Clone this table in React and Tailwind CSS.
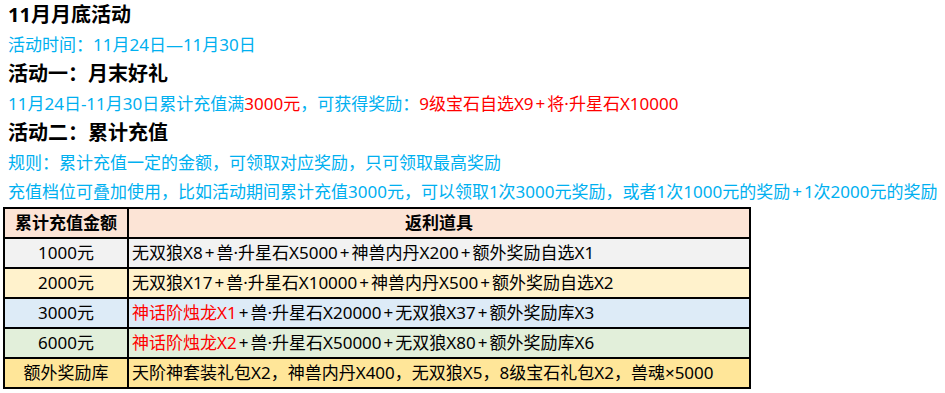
function T({ text }) {
  const parts = text.split("+");
  return (
    <>
      {parts.map((p, i) => (
        <span key={i}>
          {i > 0 && <span className="mx-[2px]">+</span>}
          {p}
        </span>
      ))}
    </>
  );
}

export default function App() {
  const font = { fontFamily: '"Noto Sans", "Noto Sans CJK SC", sans-serif' };
  const rows = [
    { amt: "1000元", bg: "bg-[#f2f2f2]", red: null, rest: "无双狼X8+兽·升星石X5000+神兽内丹X200+额外奖励自选X1" },
    { amt: "2000元", bg: "bg-[#fff2cc]", red: null, rest: "无双狼X17+兽·升星石X10000+神兽内丹X500+额外奖励自选X2" },
    { amt: "3000元", bg: "bg-[#ddebf7]", red: "神话阶烛龙X1", rest: "+兽·升星石X20000+无双狼X37+额外奖励库X3" },
    { amt: "6000元", bg: "bg-[#e2efda]", red: "神话阶烛龙X2", rest: "+兽·升星石X50000+无双狼X80+额外奖励库X6" },
    { amt: "额外奖励库", bg: "bg-[#ffe699]", red: null, rest: "天阶神套装礼包X2，神兽内丹X400，无双狼X5，8级宝石礼包X2，兽魂×5000" },
  ];
  return (
    <div className="w-[945px] h-[393px] bg-white overflow-hidden text-black" style={font}>
      <div className="px-2">
        <div className="text-[20px] font-bold leading-[29.5px]">11月月底活动</div>
        <div className="text-[17px] leading-[29.5px] text-[#00b0f0]">活动时间：11月24日—11月30日</div>
        <div className="text-[20px] font-bold leading-[29.5px]">活动一：月末好礼</div>
        <div className="text-[17px] leading-[29.5px] text-[#00b0f0]">
          11月24日-11月30日累计充值满<span className="text-[#ff0000]">3000元</span>，可获得奖励：<span className="text-[#ff0000]"><T text="9级宝石自选X9+将·升星石X10000" /></span>
        </div>
        <div className="text-[20px] font-bold leading-[29.5px]">活动二：累计充值</div>
        <div className="text-[17px] leading-[29.5px] text-[#00b0f0]">规则：累计充值一定的金额，可领取对应奖励，只可领取最高奖励</div>
        <div className="text-[17px] leading-[29.5px] text-[#00b0f0] whitespace-nowrap"><T text="充值档位可叠加使用，比如活动期间累计充值3000元，可以领取1次3000元奖励，或者1次1000元的奖励+1次2000元的奖励" /></div>
      </div>
      <table className="ml-[3px] w-[748px] border-collapse border-2 border-black text-[17px]">
        <colgroup>
          <col className="w-[124px]" />
          <col />
        </colgroup>
        <thead>
          <tr className="h-[30px] bg-[#fce4d6]">
            <th className="border-2 border-black font-bold text-center p-0">累计充值金额</th>
            <th className="border-2 border-black font-bold text-center p-0">返利道具</th>
          </tr>
        </thead>
        <tbody>
          {rows.map((r) => (
            <tr key={r.amt} className={"h-[30px] " + r.bg}>
              <td className="border-2 border-black text-center p-0 leading-none">{r.amt}</td>
              <td className="border-2 border-black pl-[3px] p-0 leading-none whitespace-nowrap">
                {r.red && <span className="text-[#ff0000]">{r.red}</span>}
                <T text={r.rest} />
              </td>
            </tr>
          ))}
        </tbody>
      </table>
    </div>
  );
}
